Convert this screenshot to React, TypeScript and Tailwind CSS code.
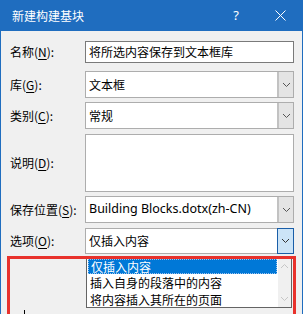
import React from "react";

const cjk = { fontFamily: '"Microsoft YaHei", "Noto Sans CJK SC", "Noto Sans", sans-serif' };

function Chevron({ color = "#444" }: { color?: string }) {
  return (
    <svg width="9" height="6" viewBox="0 0 9 6" fill="none">
      <path d="M1 1l3.5 3.5L8 1" stroke={color} strokeWidth="1" />
    </svg>
  );
}

function Label({ text, keyChar }: { text: string; keyChar: string }) {
  return (
    <div className="w-[75px] shrink-0 text-[12px] text-black" style={cjk}>
      {text}(<span className="underline underline-offset-2">{keyChar}</span>):
    </div>
  );
}

function Combo({ value, active, latin }: { value: string; active?: boolean; latin?: boolean }) {
  return (
    <div className="flex h-full w-[209px] border border-[#adadad] bg-white">
      <div
        className={`flex flex-1 items-center pl-[3px] text-black ${latin ? "text-[12.5px]" : "text-[12px]"}`}
        style={latin ? { fontFamily: '"Segoe UI", "Noto Sans", "Open Sans", sans-serif' } : cjk}
      >
        {value}
      </div>
      {active ? (
        <div className="-my-px -mr-px flex w-[17px] items-center justify-center border border-[#1a5ea8] bg-[#cce4f7]">
          <Chevron color="#333" />
        </div>
      ) : (
        <div className="flex w-[16px] items-center justify-center border-l-2 border-[#c2c2c2] bg-[#e4e4e4]">
          <Chevron color="#555" />
        </div>
      )}
    </div>
  );
}

export default function App() {
  return (
    <div className="relative h-[314px] w-[305px] overflow-hidden bg-white">
      <div className="flex h-[314px] w-[303px] flex-col border-x border-[#1f6dbf] bg-[#f0f0f0]">
        {/* title bar */}
        <div className="-mx-px flex h-[31px] shrink-0 items-center bg-[#1f6dbf] text-white">
          <div className="pl-[12px] text-[12px]" style={cjk}>新建构建基块</div>
          <div className="ml-auto w-[20px] text-center text-[13px]" style={{ fontFamily: '"Noto Sans", sans-serif' }}>?</div>
          <div className="ml-[27px] mr-[16px] flex w-[14px] justify-center">
            <svg width="11" height="11" viewBox="0 0 11 11">
              <path d="M0.5 0.5l10 10M10.5 0.5l-10 10" stroke="white" strokeWidth="1" />
            </svg>
          </div>
        </div>

        <div className="flex flex-col pl-[9px]">
          <div className="mt-[10px] flex h-[22px] items-center">
            <Label text="名称" keyChar="N" />
            <div className="flex h-full w-[209px] items-center border border-[#7a7a7a] bg-white pl-[3px] text-[12px] text-black" style={cjk}>
              将所选内容保存到文本框库
            </div>
          </div>
          <div className="mt-[8px] flex h-[27px] items-center">
            <Label text="库" keyChar="G" />
            <Combo value="文本框" />
          </div>
          <div className="mt-[4px] flex h-[27px] items-center">
            <Label text="类别" keyChar="C" />
            <Combo value="常规" />
          </div>
          <div className="mt-[5px] flex h-[58px] items-center">
            <Label text="说明" keyChar="D" />
            <div className="h-full w-[209px] border border-[#adadad] bg-white" />
          </div>
          <div className="mt-[4px] flex h-[27px] items-center">
            <Label text="保存位置" keyChar="S" />
            <Combo value="Building Blocks.dotx(zh-CN)" latin />
          </div>
          <div className="mt-[5px] flex h-[26px] items-center">
            <Label text="选项" keyChar="O" />
            <Combo value="仅插入内容" active />
          </div>
        </div>
      </div>

      {/* dropdown list */}
      <div className="absolute left-[86px] top-[257px] flex h-[51px] w-[206px] border border-[#646464] bg-white">
        <div className="flex flex-1 flex-col pt-px text-[12px]" style={cjk}>
          <div className="mx-px flex h-[15px] items-center border border-dotted border-[#9cc3ef] bg-[#0078d7] pl-[2px] text-white">仅插入内容</div>
          <div className="flex h-[17px] items-center pl-[3px] text-black">插入自身的段落中的内容</div>
          <div className="flex h-[17px] items-center pl-[3px] text-black">将内容插入其所在的页面</div>
        </div>
        <div className="flex w-[13px] flex-col items-center justify-between bg-[#f0f0f0] py-[5px]">
          <svg width="9" height="6" viewBox="0 0 9 6" fill="none">
            <path d="M1 5l3.5-3.5L8 5" stroke="#c6c6c6" strokeWidth="1" />
          </svg>
          <Chevron color="#c6c6c6" />
        </div>
      </div>

      {/* red highlight frame */}
      <div className="absolute left-[7px] top-[256px] h-[70px] w-[289px] border-[3px] border-[#e8322c]" />

      {/* partly visible element below */}
      <div className="absolute left-[24px] top-[310px] h-[4px] w-px bg-black" />
    </div>
  );
}
